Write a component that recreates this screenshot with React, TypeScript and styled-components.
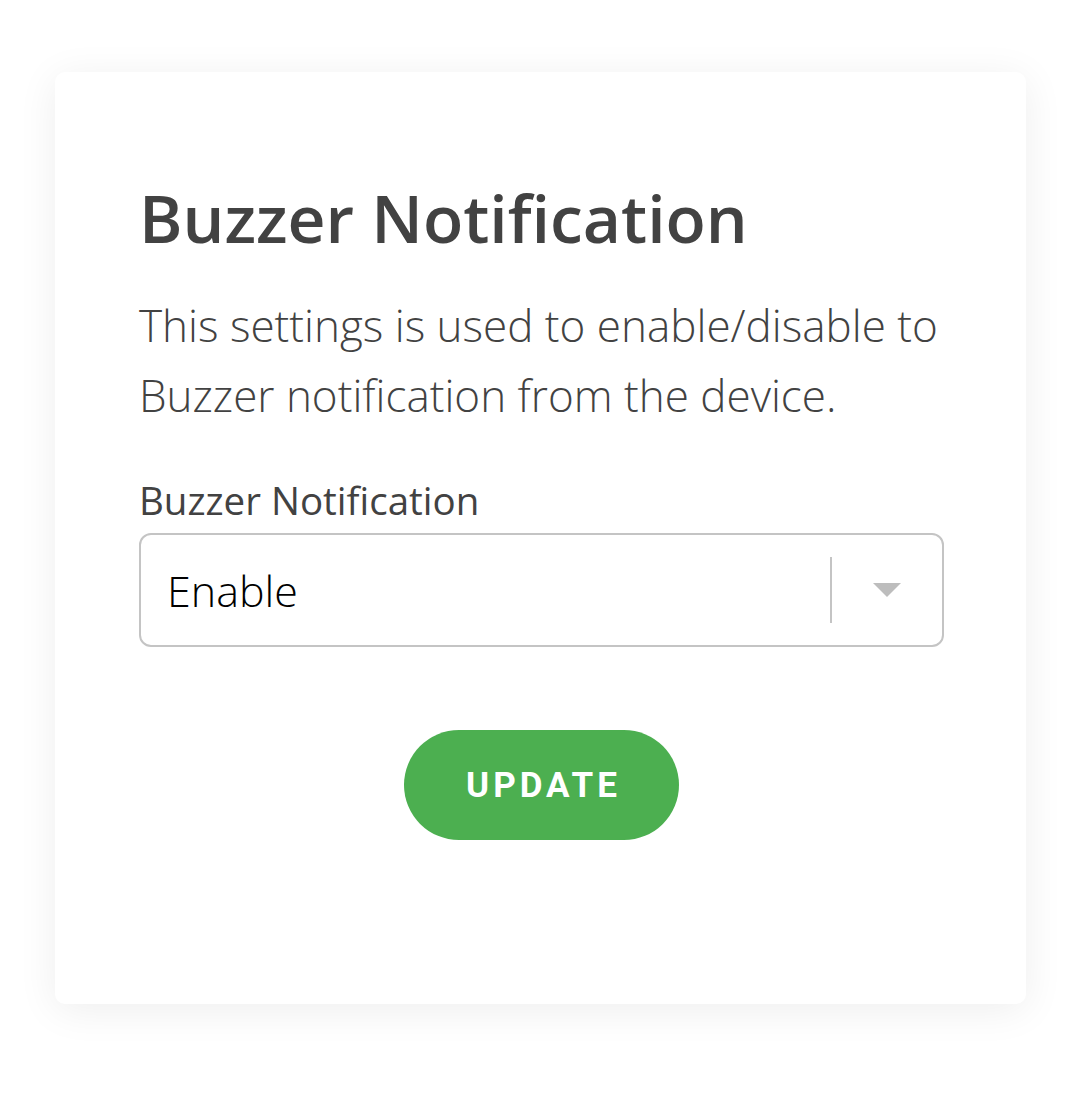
import React from "react";
import styled, { createGlobalStyle } from "styled-components";

const Global = createGlobalStyle`
  html, body { margin: 0; padding: 0; background: #ffffff; }
  body { font-family: "Open Sans", "Liberation Sans", sans-serif; }
  * { box-sizing: border-box; }
`;

const Page = styled.div`
  width: 1080px;
  height: 1106px;
  padding: 72px 54px 0 55px;
`;

const Card = styled.div`
  width: 971px;
  height: 932px;
  background: #ffffff;
  border-radius: 10px;
  box-shadow: 0 6px 40px rgba(0, 0, 0, 0.07);
  padding: 100px 83px 0 84px;
  display: flex;
  flex-direction: column;
`;

const Title = styled.h1`
  margin: 0;
  font-family: "Open Sans", sans-serif;
  font-weight: 600;
  font-size: 66px;
  line-height: 90px;
  color: #424242;
`;

const Description = styled.p`
  margin: 28px 0 0;
  font-family: "Open Sans", sans-serif;
  font-weight: 300;
  font-size: 44px;
  line-height: 70px;
  color: #424242;
`;

const Label = styled.label`
  margin-top: 44px;
  font-family: "Open Sans", sans-serif;
  font-weight: 400;
  font-size: 38.5px;
  line-height: 52px;
  color: #424242;
`;

const Select = styled.div`
  margin-top: 7px;
  width: 805px;
  height: 114px;
  border: 2px solid #c4c4c4;
  border-radius: 12px;
  display: flex;
  align-items: center;
  padding-left: 26px;
`;

const Value = styled.span`
  flex: 1;
  font-family: "Open Sans", sans-serif;
  font-weight: 300;
  font-size: 43px;
  color: #000000;
`;

const Separator = styled.span`
  width: 2px;
  height: 66px;
  background: #c4c4c4;
`;

const Indicator = styled.span`
  width: 110px;
  display: flex;
  justify-content: center;
  align-items: center;
`;

const Actions = styled.div`
  display: flex;
  justify-content: center;
  margin-top: 83px;
  width: 805px;
`;

const Button = styled.button`
  width: 275px;
  height: 110px;
  border: none;
  border-radius: 55px;
  background: #4caf50;
  color: #ffffff;
  font-family: Roboto, "Open Sans", sans-serif;
  font-weight: 700;
  font-size: 35px;
  letter-spacing: 4px;
  padding: 0 0 0 4px;
  cursor: pointer;
`;

export default function App() {
  return (
    <>
      <Global />
      <Page>
        <Card>
          <Title>Buzzer Notification</Title>
          <Description>
            This settings is used to enable/disable to Buzzer notification from the device.
          </Description>
          <Label>Buzzer Notification</Label>
          <Select>
            <Value>Enable</Value>
            <Separator />
            <Indicator>
              <svg width="28" height="14" viewBox="0 0 28 14">
                <polygon points="0,0 28,0 14,14" fill="#bdbdbd" />
              </svg>
            </Indicator>
          </Select>
          <Actions>
            <Button>UPDATE</Button>
          </Actions>
        </Card>
      </Page>
    </>
  );
}
